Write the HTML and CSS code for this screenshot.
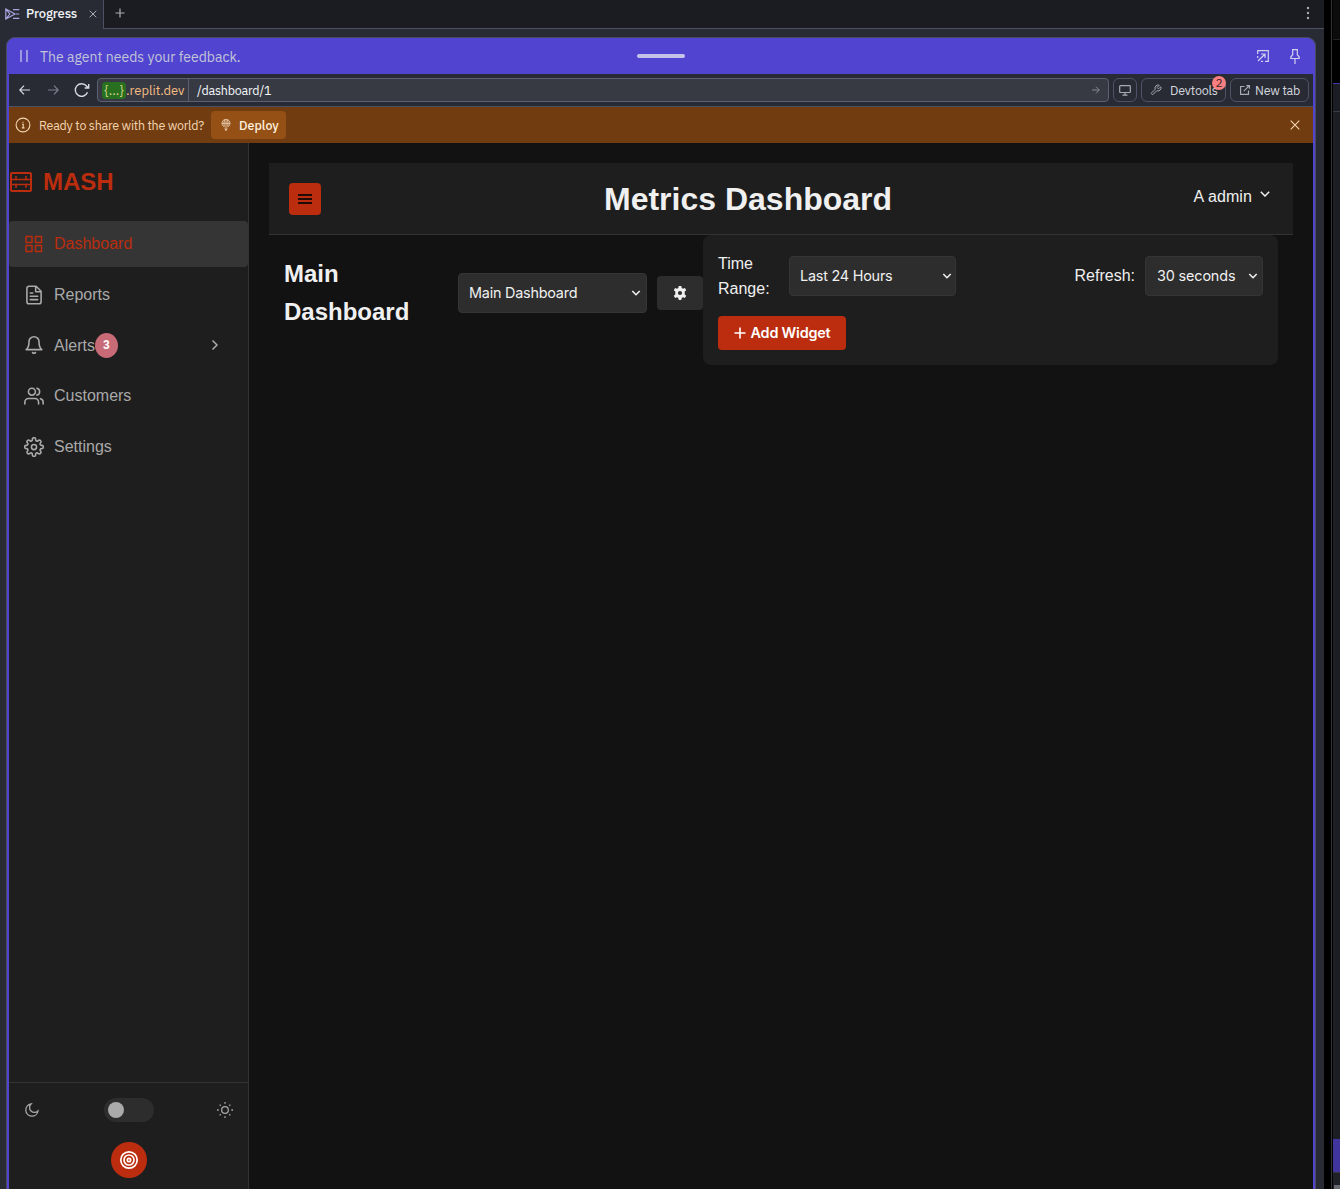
FILE: index.html
```html
<!DOCTYPE html>
<html lang="en">
<head>
<meta charset="utf-8">
<title>Metrics Dashboard</title>
<link rel="stylesheet" href="styles.css">
</head>
<body>
<div class="desktop">
  <div class="workspace">
    <div class="tabbar">
      <div class="tab">
        <svg class="tab-icon" width="16" height="12" viewBox="0 0 16 12"><path d="M.8 1v10L10 6zM.8 1l4 5-4 5M8 1.7h6.3M11 6h3.3M8 10.3h6.3"/></svg>
        <span class="tab-title">Progress</span>
        <svg class="tab-close" width="8" height="8" viewBox="0 0 8 8"><path d="m.7.7 6.6 6.6M7.3.7.7 7.3"/></svg>
      </div>
      <div class="tab-rest">
        <svg width="10" height="10" viewBox="0 0 10 10"><path d="M5 .5v9M.5 5h9"/></svg>
        <svg class="dots" width="4" height="14" viewBox="0 0 4 14"><circle cx="2" cy="2" r="1.2"/><circle cx="2" cy="7" r="1.2"/><circle cx="2" cy="12" r="1.2"/></svg>
      </div>
    </div>
    <div class="pane">
      <div class="agent-bar">
        <svg class="pause" width="8" height="12" viewBox="0 0 8 12"><path d="M1 0v12M7 0v12"/></svg>
        <span class="agent-text">The agent needs your feedback.</span>
        <span class="grip"></span>
        <span class="agent-actions">
          <svg width="12" height="12" viewBox="0 0 12 12"><path d="M.7 4V.7h10.6v10.6H8M1 11 8 4M4 4h4v4M.7 6v2M4 11.3h2"/></svg>
          <svg width="10" height="15" viewBox="0 0 10 15"><path d="M2 .7h6M2.7.7v5L.8 8v1.5h8.4V8L7.3 5.700v-5M5 9.500V15"/></svg>
        </span>
      </div>
      <div class="urlbar">
        <svg class="nav-back" width="12" height="10" viewBox="0 0 12 10"><path d="M11 5H1M5 .7.8 5 5 9.300"/></svg>
        <svg class="nav-fwd" width="12" height="10" viewBox="0 0 12 10"><path d="M1 5h10M7 .7 11.200 5 7 9.300"/></svg>
        <svg class="nav-reload" width="16" height="14" viewBox="0 0 16 14"><path d="M13.500 9.300A6.300 6.300 0 1 1 12.500 3l2 2M14.700 1v4h-4"/></svg>
        <div class="address">
          <div class="host"><span class="braces">{...}</span><span class="domain">.replit.dev</span></div>
          <div class="path">/dashboard/1</div>
          <svg class="go" width="8" height="8" viewBox="0 0 8 8"><path d="M0 4h7.300M4 .7 7.300 4 4 7.300"/></svg>
        </div>
        <button class="chip chip-screen"><svg width="12" height="11" viewBox="0 0 12 11"><path d="M1.500.7h9q.8 0 .8.8v5.200q0 .8-.8.8h-9q-.8 0-.8-.8V1.500q0-.8.8-.8zM6 7.500V10M3.500 10.200h5"/></svg></button>
        <button class="chip chip-dev"><svg width="12" height="12" viewBox="0 0 24 24"><path stroke-width="2" d="M14.700 6.300a1 1 0 0 0 0 1.400l1.600 1.600a1 1 0 0 0 1.400 0l3.770-3.770a6 6 0 0 1-7.940 7.940l-6.910 6.910a2.120 2.120 0 0 1-3-3l6.910-6.910a6 6 0 0 1 7.940-7.940z"/></svg><span class="dev-text">Devtools</span><span class="count">2</span></button>
        <button class="chip chip-tab"><svg width="10" height="10" viewBox="0 0 10 10"><path d="M4.500 1.500H.6v7.900h7.900V5.500M3.800 6.200 9.300.7M6.300.6h3.100v3.100"/></svg><span class="newtab-text">New tab</span></button>
      </div>
      <div class="deploy-bar">
        <svg width="16" height="16" viewBox="0 0 16 16"><circle cx="8" cy="8" r="6.900"/><path d="M7 7.300h1.200v3.400M6.800 10.900h2.800M8 4.700v1.100"/></svg>
        <span class="deploy-text">Ready to share with the world?</span>
        <button class="deploy"><svg width="10" height="12" viewBox="0 0 10 12"><path d="M3.300 7.900A4 4 0 1 1 6.700 7.900M1 4.300h8M5 .6v10.900M3.400 7.500Q2.300 4 3.600.9M6.600 7.500Q7.700 4 6.400.9M3.700 9.500 5 11.500l1.300-2"/></svg><span>Deploy</span></button>
        <svg class="deploy-close" width="10" height="10" viewBox="0 0 10 10"><path d="m.7.7 8.600 8.600M9.300.7.7 9.300"/></svg>
      </div>
      <div class="app">
        <aside class="sidebar">
          <div class="brand">
            <svg width="22" height="20" viewBox="0 0 22 20"><rect x="1" y="1" width="20" height="18" rx="1"/><path stroke-width="1.500" d="M1 7.500h20M1 12.500h20M6 4v3.500M16 4v3.500M6 12.500V16M16 12.500V16M6 7.500v1M16 7.500v1M6 11.500v1M16 11.500v1"/></svg>
            <span>MASH</span>
          </div>
          <nav class="menu">
            <a class="item active"><svg width="20" height="20" viewBox="0 0 20 20"><path d="M2 2.500h6v6H2zM11.500 2.500h6v6h-6zM2 11.500h6v6H2zM11.500 11.500h6v6h-6z"/></svg><span>Dashboard</span></a>
            <a class="item"><svg width="20" height="20" viewBox="0 0 24 24"><path stroke-width="1.900" d="M14.500 1.500H6A2.500 2.500 0 0 0 3.500 4v16A2.500 2.500 0 0 0 6 22.500h12a2.500 2.500 0 0 0 2.500-2.500V7.500zM14 1.500v6.500h6.500M7.500 9.500h3M7.500 13.500h9M7.500 17.500h9"/></svg><span>Reports</span></a>
            <a class="item alerts"><svg width="20" height="20" viewBox="0 0 24 24"><path stroke-width="1.900" d="M18 8A6 6 0 0 0 6 8c0 7-3.500 9.500-3.500 9.500h19S18 15 18 8M13.730 21a2 2 0 0 1-3.460 0"/></svg><span>Alerts</span><b class="badge">3</b><svg class="chev" width="8" height="12" viewBox="0 0 8 12"><path d="m1.500 1.500 4.500 4.500-4.500 4.500"/></svg></a>
            <a class="item customers"><svg width="20" height="20" viewBox="0 0 24 24"><path stroke-width="1.900" d="M17.500 21.500v-2a4.500 4.500 0 0 0-4.500-4.500H5.500A4.500 4.500 0 0 0 1 19.500v2M9.500 11a4.200 4.200 0 1 0 0-8.400 4.200 4.200 0 0 0 0 8.400M23 21.500v-2a4.500 4.500 0 0 0-3.300-4.300M15.500 2.700a4.200 4.200 0 0 1 0 8.200"/></svg><span>Customers</span></a>
            <a class="item"><svg width="20" height="20" viewBox="0 0 24 24"><circle cx="12" cy="12" r="3.100" stroke-width="1.900"/><path stroke-width="1.900" d="M19.400 15a1.650 1.650 0 0 0 .33 1.820l.06.06a2 2 0 1 1-2.830 2.830l-.06-.06A1.650 1.650 0 0 0 14 21v.2a2 2 0 0 1-4 0V21a1.650 1.650 0 0 0-2.900-1.350l-.06.06a2 2 0 1 1-2.830-2.830l.06-.06A1.650 1.650 0 0 0 3 14h-.2a2 2 0 0 1 0-4H3a1.650 1.650 0 0 0 1.270-2.820l-.06-.06a2 2 0 1 1 2.830-2.830l.06.06A1.650 1.650 0 0 0 10 3v-.2a2 2 0 0 1 4 0V3a1.650 1.650 0 0 0 2.900 1.350l.06-.06a2 2 0 1 1 2.830 2.830l-.06.06A1.650 1.650 0 0 0 21 10h.2a2 2 0 0 1 0 4H21a1.650 1.650 0 0 0-1.600 1z"/></svg><span>Settings</span></a>
          </nav>
          <div class="side-foot">
            <div class="theme">
              <svg width="16" height="16" viewBox="0 0 24 24"><path stroke-width="1.900" d="M21 13.500A9.200 9.200 0 1 1 10.500 3a7.200 7.200 0 0 0 10.500 10.500z"/></svg>
              <span class="switch"><i></i></span>
              <svg width="16" height="16" viewBox="0 0 24 24"><circle stroke-width="1.900" cx="12" cy="12" r="5"/><path stroke-width="1.900" d="M12 0v2.500M12 21.500V24M0 12h2.500M21.500 12H24M4 4l1.600 1.600M18.400 18.400 20 20M4 20l1.600-1.600M18.400 5.600 20 4"/></svg>
            </div>
            <button class="target"><svg width="20" height="20" viewBox="0 0 20 20"><circle cx="10" cy="10" r="8.200"/><circle cx="10" cy="10" r="5"/><circle cx="10" cy="10" r="1.700"/></svg></button>
          </div>
        </aside>
        <main class="content">
          <header class="topbar">
            <button class="burger"><svg width="14" height="10" viewBox="0 0 14 10"><path d="M0 1h14M0 5h14M0 9h14"/></svg></button>
            <h1>Metrics Dashboard</h1>
            <div class="user"><span>A admin</span><svg width="10" height="6" viewBox="0 0 10 6"><path d="m.8.8 4.200 4.200L9.200.8"/></svg></div>
          </header>
          <section class="toolbar">
            <h2>Main Dashboard</h2>
            <div class="select board"><span>Main Dashboard</span><svg width="10" height="6" viewBox="0 0 10 6"><path d="m1.300 1 3.700 3.700L8.700 1"/></svg></div>
            <button class="gear"><svg width="16" height="16" viewBox="0 0 16 16"><path d="M6.700 1h2.600l.4 2 1.300.7 1.900-.7 1.300 2.300-1.500 1.300v2.800l1.500 1.300-1.300 2.300-1.900-.7-1.300.7-.4 2H6.700l-.4-2-1.300-.7-1.900.7-1.300-2.300 1.500-1.300V6.600L1.800 5.300 3.100 3l1.900.7L6.300 3zM8 5.900a2.100 2.100 0 1 0 0 4.200 2.100 2.100 0 0 0 0-4.200z"/></svg></button>
            <div class="filters">
              <div class="filter-row">
                <label class="range">Time Range:</label>
                <div class="select hours"><span>Last 24 Hours</span><svg width="10" height="6" viewBox="0 0 10 6"><path d="m1.300 1 3.700 3.700L8.700 1"/></svg></div>
                <label class="refresh">Refresh:</label>
                <div class="select secs"><span>30 seconds</span><svg width="10" height="6" viewBox="0 0 10 6"><path d="m1.300 1 3.700 3.700L8.700 1"/></svg></div>
              </div>
              <button class="add"><svg width="12" height="12" viewBox="0 0 12 12"><path d="M6 .5v11M.5 6h11"/></svg><span>Add Widget</span></button>
            </div>
          </section>
        </main>
      </div>
    </div>
  </div>
  <div class="gutter"></div>
  <div class="neighbor">
    <div class="n-head"></div><div class="n-top"></div><div class="n-bar"></div><div class="n-body"></div><div class="n-button"></div><div class="n-foot"><i></i></div>
  </div>
</div>
</body>
</html>
```

FILE: styles.css
```css
* { box-sizing: border-box; }
body { margin: 0; background: #000; font-family: "Liberation Sans", Arial, sans-serif; }
svg { display: block; flex: none; fill: none; stroke: currentColor; stroke-width: 1.2; }
button { border: 0; padding: 0; margin: 0; font: inherit; color: inherit; background: none; }
h1, h2 { margin: 0; }
.desktop { display: flex; width: 1340px; height: 1189px; overflow: hidden; }
.workspace { width: 1324px; display: flex; flex-direction: column; background: #282b34; font-family: "IBM Plex Sans", Roboto, sans-serif; }
.tabbar { height: 29px; display: flex; flex: none; }
.tab { width: 104px; display: flex; align-items: center; padding-left: 5px; border-right: 1px solid #4b5063; color: #f2f3f7; font-size: 13px; font-weight: 500; padding-bottom: 2px; }
.tab-icon { color: #aaa5e0; margin-right: 5px; }
.tab-title { width: 52px; white-space: nowrap; letter-spacing: -.12px; }
.tab-close { margin-left: 11px; color: #aaadb7; stroke-width: 1; }
.tab-rest { flex: 1; display: flex; align-items: center; justify-content: space-between; padding: 0 14px 2px 11px; background: #1b1c21; border-bottom: 1px solid #4b5063; color: #aaadb7; }
.dots { fill: currentColor; stroke: none; }
.pane { margin: 8px 8px 0 6px; flex: 1; display: flex; flex-direction: column; border: solid #494c61; border-width: 1px 1px 0; border-radius: 9px 9px 0 0; background: #5144d1; padding: 0 2px; overflow: hidden; }
.agent-bar { height: 36px; display: flex; align-items: center; position: relative; padding-left: 11px; flex: none; color: #d2d1f0; }
.pause { margin-right: 12px; }
.agent-text { font-size: 14px; letter-spacing: .02px; color: #c2c5d6; padding-top: 2px; }
.grip { position: absolute; left: 628px; top: 16px; width: 48px; height: 4px; border-radius: 2px; background: #c5c4e8; }
.agent-actions { margin-left: auto; display: flex; align-items: center; gap: 21px; padding-right: 13px; }
.urlbar { height: 33px; flex: none; display: flex; align-items: center; background: #282b34; border-bottom: 1px solid #4b5063; padding: 0 4px 0 10px; color: #d8dae2; }
.nav-back { margin-right: 16px; }
.nav-fwd { color: #7c808e; margin-right: 15px; }
.nav-reload { margin-right: 7px; stroke-width: 1.4; }
.address { height: 24px; width: 1012px; display: flex; align-items: center; border: 1px solid #5b6075; border-radius: 4px; background: #373a43; font-size: 13px; color: #f5f6fa; }
.host { width: 91px; height: 22px; display: flex; align-items: center; padding-left: 4px; border-right: 1px solid #5b6075; color: #f5bd84; }
.braces { width: 24px; height: 17px; line-height: 17px; text-align: center; border-radius: 4px; background: #28701f; color: #d8d88c; }
.path { padding-left: 8px; font-size: 12.5px; letter-spacing: -.2px; }
.go { margin-left: auto; margin-right: 8px; color: #858997; stroke-width: 1; }
.chip { height: 24px; display: flex; align-items: center; border: 1px solid #4f5367; border-radius: 6px; position: relative; font-size: 12.5px; letter-spacing: -.2px; color: #d5d7df; stroke-width: 1; }
.chip svg { color: #a7aab5; }
.chip-screen { width: 24px; justify-content: center; margin-left: 4px; }
.chip-dev { width: 85px; margin-left: 4px; padding-left: 8px; gap: 8px; }
.chip-tab { width: 79px; margin-left: 4px; padding-left: 9px; gap: 5px; white-space: nowrap; }
.count { position: absolute; right: -1px; top: -3px; width: 14px; height: 14px; border-radius: 50%; background: #f98080; color: #41252b; text-align: center; font-size: 12px; line-height: 14px; }
.deploy-bar { height: 36px; flex: none; display: flex; align-items: center; background: #703c10; color: #f4d5b0; padding: 0 13px 0 6px; font-size: 12.5px; letter-spacing: -.25px; }
.deploy-bar svg { stroke-width: 1.1; }
.deploy-text { margin-left: 8px; width: 165px; white-space: nowrap; }
.deploy { width: 75px; height: 28px; margin-left: 7px; display: flex; align-items: center; gap: 8px; padding-left: 10px; background: #945015; border-radius: 4px; font-weight: 500; color: #ffefdc; }
.deploy-bar .deploy svg { stroke-width: .7; }
.deploy-close { margin-left: auto; }
.app { flex: 1; display: flex; background: #121212; color: #f0f0f0; font-family: "Liberation Sans", Arial, sans-serif; font-size: 16px; }
.sidebar { width: 240px; display: flex; flex-direction: column; background: #1e1e1e; border-right: 1px solid #333; color: #a9a9a9; }
.brand { height: 78px; display: flex; align-items: center; gap: 11px; padding-left: 1px; color: #bb2d0e; font-size: 24px; font-weight: 700; }
.brand svg { stroke-width: 2; }
.menu { display: flex; flex-direction: column; gap: 5px; }
.item { height: 45.7px; display: flex; align-items: center; padding-left: 15px; border-radius: 4px; }
.item > span { padding-top: 1px; }
.item > svg:first-child { margin-right: 10px; stroke-width: 1.5; stroke-linecap: round; stroke-linejoin: round; }
.item.active { background: #353535; color: #bb2d0e; }
.badge { width: 23px; height: 25px; margin-top: 1px; border-radius: 50%; background: #c86b77; color: #fff; font-size: 12px; line-height: 24px; text-align: center; }
.chev { margin-left: auto; margin-right: 29px; stroke-width: 1.5; }
.side-foot { margin-top: auto; height: 107px; border-top: 1px solid #333; padding: 15px 15px 0; }
.theme { height: 24px; display: flex; align-items: center; justify-content: space-between; }
.switch { width: 50px; height: 24px; border-radius: 12px; background: #2d2d2d; padding: 4px; }
.switch i { display: block; width: 16px; height: 16px; border-radius: 50%; background: #aaa; }
.target { width: 36px; height: 36px; display: flex; align-items: center; justify-content: center; margin: 20px auto 0; border-radius: 50%; background: #bb2d0e; color: #fff; }
.target svg { stroke-width: 1.7; }
.content { flex: 1; padding: 20px; }
.topbar { height: 72px; display: flex; align-items: center; padding: 0 23px 0 20px; background: #1e1e1e; border-bottom: 1px solid #333; }
.burger { width: 32px; height: 32px; display: flex; align-items: center; justify-content: center; background: #bb2d0e; border-radius: 4px; color: #220b06; }
.burger svg { stroke-width: 2; }
h1 { margin-left: 283px; width: 290px; white-space: nowrap; font-size: 32px; line-height: 38px; }
.user { margin-left: auto; display: flex; align-items: center; gap: 8px; padding-bottom: 3px; letter-spacing: .1px; }
.user svg { margin-bottom: 6px; stroke-width: 1.5; }
.toolbar { display: flex; padding: 0 15px; align-items: flex-start; }
h2 { width: 174px; padding: 20px 40px 0 0; font-size: 24px; line-height: 38px; }
.select { height: 40px; display: flex; align-items: center; justify-content: space-between; padding: 0 5px 0 10px; background: #2d2d2d; border: 1px solid #353535; border-radius: 4px; font: 14.4px Inter, sans-serif; letter-spacing: -.22px; white-space: nowrap; }
.select span { padding-bottom: 1px; }
.select svg { stroke-width: 1.6; }
.board { width: 189px; margin-top: 38px; }
.hours, .secs { padding-right: 3px; }
.gear { width: 46px; height: 34px; margin: 41px 0 0 10px; display: flex; align-items: center; justify-content: center; background: #2d2d2d; border-radius: 4px; }
.gear svg { fill: currentColor; fill-rule: evenodd; stroke: none; }
.filters { width: 575px; height: 130px; padding: 16px 15px 15px; border-radius: 8px; background: #1e1e1e; }
.filter-row { height: 50px; display: flex; align-items: center; line-height: 25px; }
.range { width: 71px; padding-right: 15px; }
.hours { width: 167px; }
.refresh { margin-left: auto; margin-right: 10px; padding-bottom: 1px; }
.secs { width: 118px; padding-left: 11px; padding-right: 4px; letter-spacing: -.14px; }
.add { width: 128px; height: 34px; margin-top: 15px; display: flex; align-items: center; justify-content: center; gap: 5px; border-radius: 4px; background: #bb2d0e; color: #fff; font: 600 14.4px Inter, sans-serif; letter-spacing: -.2px; }
.add span { padding-bottom: 1px; }
.add svg { stroke-width: 1.6; }
.gutter { width: 7px; background: #000; }
.neighbor { width: 9px; border-left: 1px solid #333; padding-left: 1px; display: flex; flex-direction: column; background: #000; }
.n-head { height: 40px; border-bottom: 1px solid #222; background: #0c0c0d; }
.n-top { height: 43px; }
.n-bar { height: 29px; background: #1c1d24; border: solid #4238a5; border-width: 1px 0 0; border-bottom: 1px solid #383b47; }
.n-body { flex: 1; background: #1d1e23; }
.n-button { height: 33px; background: #40349f; }
.n-foot { height: 17px; background: #202127; border-top: 1px solid #33353f; padding: 12px 0 0 1px; }
.n-foot i { display: block; height: 4px; background: #666870; }
```
